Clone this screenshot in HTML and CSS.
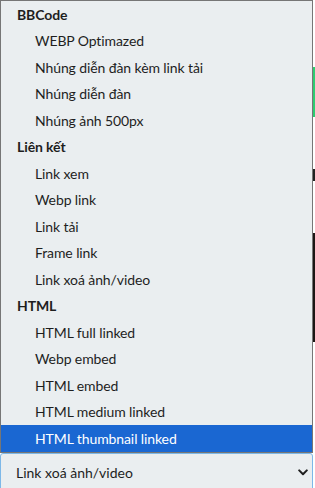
FILE: index.html
```html
<!DOCTYPE html>
<html lang="vi">
<head>
<meta charset="utf-8">
<link rel="stylesheet" href="styles.css">
</head>
<body>
<div class="page">
  <div class="backdrop">
    <div class="btn-green"></div>
    <div class="mark"></div>
    <div class="dots"></div>
    <div class="photo"></div>
  </div>
  <div class="field">
    <div class="select">
      <span class="select-text">Link xoá ảnh/video</span>
      <svg class="chev" width="10" height="7" viewBox="0 0 10 7"><path d="M1.2 1.4 L5 5.2 L8.8 1.4" fill="none" stroke="#1f1f1f" stroke-width="2" stroke-linecap="round" stroke-linejoin="round"/></svg>
    </div>
  </div>
  <div class="popup">
    <div class="group">BBCode</div>
    <div class="opt">WEBP Optimazed</div>
    <div class="opt">Nhúng diễn đàn kèm link tải</div>
    <div class="opt">Nhúng diễn đàn</div>
    <div class="opt">Nhúng ảnh 500px</div>
    <div class="group">Liên kết</div>
    <div class="opt">Link xem</div>
    <div class="opt">Webp link</div>
    <div class="opt">Link tải</div>
    <div class="opt">Frame link</div>
    <div class="opt">Link xoá ảnh/video</div>
    <div class="group">HTML</div>
    <div class="opt">HTML full linked</div>
    <div class="opt">Webp embed</div>
    <div class="opt">HTML embed</div>
    <div class="opt">HTML medium linked</div>
    <div class="opt selected">HTML thumbnail linked</div>
  </div>
</div>
</body>
</html>
```
FILE: styles.css
```css
html, body {
  margin: 0;
  padding: 0;
  background: #ffffff;
  overflow: hidden;
}
.page {
  position: relative;
  width: 315px;
  height: 488px;
  font-family: "Lato", "Open Sans", sans-serif;
  color: #1e1e1e;
}
.backdrop {
  display: flex;
  flex-direction: column;
  height: 453px;
}
.btn-green {
  margin-top: 67px;
  height: 50px;
  background: #2ecc71;
}
.mark {
  margin-top: 52px;
  height: 12px;
  background: #222;
}
.dots {
  margin-top: 26px;
  height: 26px;
}
.photo {
  margin-top: 0;
  height: 109px;
  background: #1c1614;
}
.field {
  width: 313px;
}
.select {
  box-sizing: border-box;
  height: 38px;
  display: flex;
  align-items: center;
  justify-content: space-between;
  padding: 0 4px 0 15px;
  background: #eaeef0;
  border: 1px solid #7db8e8;
  border-radius: 3px;
  font-size: 14px;
}
.chev {
  display: block;
  margin-top: 1px;
}
.popup {
  position: absolute;
  left: 0;
  top: 0;
  width: 313px;
  height: 453px;
  box-sizing: border-box;
  border: 1px solid #767676;
  background: #eaeef0;
  font-size: 14px;
  letter-spacing: -0.1px;
}
.group, .opt {
  height: 26.5px;
  display: flex;
  align-items: center;
  white-space: nowrap;
}
.group {
  padding-left: 16px;
  font-weight: 700;
}
.opt {
  padding-left: 34px;
}
.selected {
  background: #1a67d2;
  color: #ffffff;
}
```
